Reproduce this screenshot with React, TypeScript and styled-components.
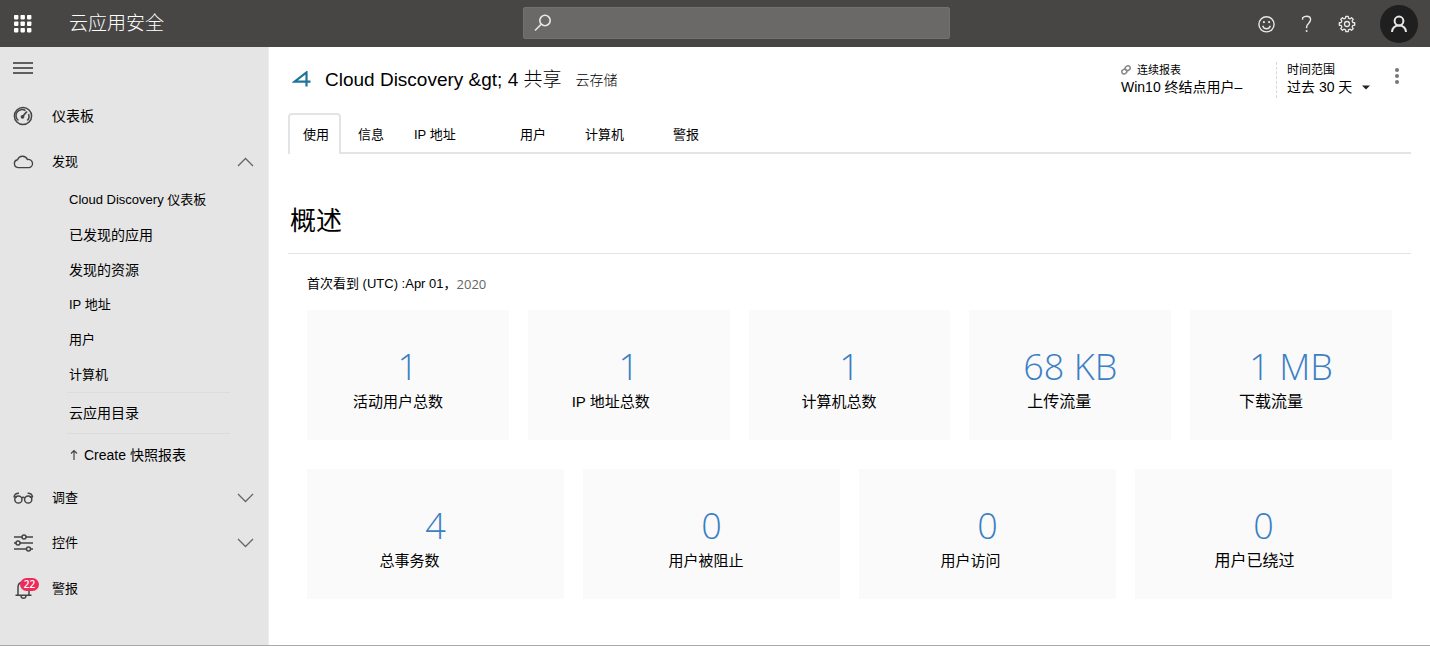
import React from "react";
import styled, { createGlobalStyle } from "styled-components";

const GlobalStyle = createGlobalStyle`
  *, *::before, *::after { box-sizing: border-box; }
  body {
    margin: 0;
    background: #fff;
    color: #000;
    font-family: "Liberation Sans", "Noto Sans CJK SC", sans-serif;
    font-size: 13px;
    line-height: 20px;
  }
  button, input, select { font: inherit; color: inherit; }
  h1, h2, p, ul, dl, dd { margin: 0; padding: 0; font-weight: 400; }
  ul { list-style: none; }
`;

const Page = styled.div`
  display: flex;
  flex-direction: column;
  min-height: 100vh;
  border-bottom: 1px solid #a8a8a8;
`;

/* ---------- top bar ---------- */

const TopBar = styled.header`
  display: grid;
  grid-template-columns: 523fr 427fr 480fr;
  align-items: center;
  height: 47px;
  background: #484644;
  color: #e8e8e8;
`;

const Brand = styled.div`
  display: flex;
  align-items: center;
  gap: 32px;
  padding-left: 8px;
`;

const BrandName = styled.span`
  color: #fff;
  font-family: "Noto Sans CJK SC", sans-serif;
  font-weight: 300;
  font-size: 19px;
  line-height: 28px;
  padding-bottom: 4px;
`;

const IconButton = styled.button<{ $size?: number }>`
  display: flex;
  align-items: center;
  justify-content: center;
  width: ${(p) => p.$size ?? 40}px;
  height: ${(p) => p.$size ?? 40}px;
  padding: 0;
  border: 0;
  background: none;
  cursor: pointer;
`;

const SearchBox = styled.label`
  display: flex;
  align-items: center;
  gap: 8px;
  height: 32px;
  padding: 0 10px;
  margin-bottom: 1px;
  border: 1px solid #73716f;
  border-radius: 2px;
  background: #6b6967;
`;

const SearchInput = styled.input`
  flex: 1;
  min-width: 0;
  border: 0;
  outline: 0;
  background: none;
`;

const Tools = styled.div`
  display: flex;
  align-items: center;
  justify-content: flex-end;
  padding-right: 12px;
`;

const Avatar = styled.button`
  display: flex;
  align-items: center;
  justify-content: center;
  width: 38px;
  height: 38px;
  margin-left: 13px;
  padding: 0;
  border: 0;
  border-radius: 50%;
  background: #1f1f1f;
  cursor: pointer;
`;

/* ---------- side navigation ---------- */

const Body = styled.div`
  display: flex;
  flex: 1;
`;

const Sidebar = styled.nav`
  flex: 0 0 269px;
  background: #e5e5e5;
  border-right: 1px solid #ececec;
`;

const MenuRow = styled.div`
  padding: 6px 0 0 8px;
  height: 42px;
`;

const NavItem = styled.a<{ $height: number }>`
  display: flex;
  align-items: center;
  height: ${(p) => p.$height}px;
  padding: 0 14px 0 12px;
  color: #000;
  text-decoration: none;
`;

const NavIcon = styled.span`
  position: relative;
  display: flex;
  width: 40px;
  color: #444;
`;

const NavLabel = styled.span<{ $size?: number }>`
  flex: 1;
  font-size: ${(p) => p.$size ?? 13}px;
`;

const Badge = styled.span`
  position: absolute;
  left: 8px;
  top: 0;
  width: 19px;
  height: 13px;
  border-radius: 7px;
  background: #ee2b58;
  color: #fff;
  font: 600 10px/13px "Open Sans", sans-serif;
  text-align: center;
`;

const SubList = styled.ul`
  padding: 0 38px 0 67px;
`;

const SubItem = styled.li<{ $height?: number; $divider?: boolean; $size?: number }>`
  display: flex;
  align-items: center;
  height: ${(p) => p.$height ?? 35}px;
  padding-left: 2px;
  border-top: ${(p) => (p.$divider ? "1px solid #dcdcdc" : "0")};
  font-size: ${(p) => p.$size ?? 13}px;
  white-space: nowrap;
`;

const SubLink = styled.a`
  display: flex;
  align-items: center;
  gap: 5px;
  color: #000;
  text-decoration: none;
`;

/* ---------- main area ---------- */

const Main = styled.main`
  flex: 1;
  min-width: 0;
  padding: 15px 19px 45px;
`;

const ReportHeader = styled.div`
  display: flex;
  align-items: flex-start;
  height: 51px;
`;

const TitleGroup = styled.div`
  display: flex;
  align-items: center;
  flex: 1;
  padding: 2px 0 0 4px;
`;

const Title = styled.h1`
  margin: 0 14px;
  font-size: 19px;
  line-height: 28px;
  white-space: nowrap;
`;

const LightCjk = styled.span`
  font-family: "Noto Sans CJK SC", sans-serif;
  font-weight: 300;
`;

const Category = styled.span`
  padding-top: 2px;
  font-size: 14px;
  font-weight: 300;
`;

const Report = styled.div`
  width: 155px;
`;

const Caption = styled.div<{ $size: number }>`
  display: flex;
  align-items: center;
  gap: 6px;
  font-size: ${(p) => p.$size}px;
  line-height: 16px;
`;

const ReportName = styled.p`
  font-size: 14px;
  line-height: 18px;
  white-space: nowrap;
`;

const Range = styled.div`
  width: 107px;
  height: 36px;
  padding-left: 10px;
  border-left: 1px dashed #d8d8d8;
`;

const SelectWrap = styled.div`
  display: flex;
  align-items: center;
  height: 18px;
`;

const Select = styled.select`
  width: 75px;
  height: 18px;
  padding: 0;
  border: 0;
  background: none;
  font-size: 14px;
  line-height: 18px;
  appearance: none;
`;

const Tabs = styled.div`
  display: flex;
  gap: 2px;
  border-bottom: 2px solid #e4e4e4;
`;

const Tab = styled.button<{ $active?: boolean; $width: number }>`
  width: ${(p) => p.$width}px;
  height: 41px;
  margin: 0 0 -2px;
  padding: 0 13px;
  border: 2px solid ${(p) => (p.$active ? "#e4e4e4" : "transparent")};
  border-bottom: 0;
  border-radius: 4px 4px 0 0;
  background: ${(p) => (p.$active ? "#fff" : "none")};
  text-align: left;
  white-space: nowrap;
  cursor: pointer;
`;

const SectionTitle = styled.h2`
  height: 100px;
  padding: 47px 0 0 2px;
  border-bottom: 1px solid #e4e4e4;
  font-size: 26px;
  line-height: 40px;
`;

const Overview = styled.section`
  padding: 20px 19px 0;
`;

const FirstSeen = styled.p`
  display: flex;
  height: 36px;
`;

const Year = styled.span`
  color: #666;
  font-family: "Open Sans", sans-serif;
`;

const CardRow = styled.dl<{ $columns: number }>`
  display: grid;
  grid-template-columns: repeat(${(p) => p.$columns}, 1fr);
  gap: 19px;
  margin-bottom: 29px;
  &:last-child { margin-bottom: 0; }
`;

const Card = styled.div`
  display: flex;
  flex-direction: column-reverse;
  align-items: center;
  justify-content: flex-end;
  height: 130px;
  padding-top: 34px;
  background: #fafafa;
`;

const Figure = styled.dd`
  color: #3b7fc4;
  font-family: "Open Sans", sans-serif;
  font-size: 36px;
  font-weight: 300;
  line-height: 46px;
`;

const CardLabel = styled.dt<{ $width: number; $size?: number }>`
  width: ${(p) => p.$width}px;
  font-size: ${(p) => p.$size ?? 15}px;
  line-height: 24px;
  white-space: nowrap;
`;

/* ---------- icons ---------- */

const Stroke = ({ w, h, sw = 1.3, children }: { w: number; h: number; sw?: number; children: React.ReactNode }) => (
  <svg width={w} height={h} viewBox={`0 0 ${w} ${h}`} fill="none" stroke="currentColor" strokeWidth={sw} aria-hidden="true">
    {children}
  </svg>
);

const WaffleIcon = () => (
  <svg width="20" height="20" viewBox="0 0 20 20" fill="#fff" aria-hidden="true">
    {[1, 7.5, 14].map((y) => [1, 7.5, 14].map((x) => <rect key={`${x}-${y}`} x={x} y={y} width="4.4" height="4.4" rx="0.8" />))}
  </svg>
);

const SearchIcon = () => (
  <Stroke w={18} h={18} sw={1.6}>
    <circle cx="11" cy="6.5" r="5.2" />
    <path d="M7.2 10.3 1 16.5" />
  </Stroke>
);

const SmileIcon = () => (
  <Stroke w={18} h={18} sw={1.4}>
    <circle cx="8.5" cy="9.3" r="7.6" />
    <path d="M4.7 10.700c.6 2 2 3 3.800 3s3.200-1 3.800-3" />
    <circle cx="5.900" cy="7.100" r="1.100" fill="currentColor" stroke="none" />
    <circle cx="11.100" cy="7.100" r="1.100" fill="currentColor" stroke="none" />
  </Stroke>
);

const HelpIcon = () => (
  <Stroke w={12} h={18} sw={1.4}>
    <path d="M1.600 4.800V2.800C2.600 1.900 4 1.200 5.600 1.200c2.400 0 4 1.400 4 3.400 0 3.600-4 4-4 7.400v1.200" />
    <circle cx="5.600" cy="16" r="1" fill="currentColor" stroke="none" />
  </Stroke>
);

const gearPath = Array.from({ length: 32 }, (_, i) => {
  const step = Math.floor(i / 4);
  const offset = [-0.24, -0.16, 0.16, 0.24][i % 4];
  const radius = i % 4 === 1 || i % 4 === 2 ? 7.8 : 6;
  const angle = (step * Math.PI) / 4 + offset;
  return `${i ? "L" : "M"}${(9 + radius * Math.cos(angle)).toFixed(2)} ${(9 + radius * Math.sin(angle)).toFixed(2)}`;
}).join("");

const GearIcon = () => (
  <Stroke w={18} h={18} sw={1.3}>
    <path d={`${gearPath}Z`} strokeLinejoin="round" />
    <circle cx="9" cy="9" r="2.500" />
  </Stroke>
);

const PersonIcon = () => (
  <Stroke w={18} h={18} sw={2}>
    <circle cx="9" cy="6" r="4.400" />
    <path d="M2 17c.3-4 3-6.600 7-6.600s6.700 2.600 7 6.600" />
  </Stroke>
);

const MenuIcon = () => (
  <Stroke w={20} h={14} sw={1.5}>
    <path d="M0 2h20M0 7h20M0 12h20" stroke="#333" />
  </Stroke>
);

const GaugeIcon = () => (
  <Stroke w={22} h={20} sw={1.500}>
    <circle cx="11" cy="10" r="8.600" />
    <path d="M6.500 14.500A6 6 0 0 1 13.500 4.700M16.500 8a6 6 0 0 1-1.200 6.500" />
    <path d="M10.500 10.500 15 5.500" strokeWidth="1.800" />
    <circle cx="10.500" cy="10.800" r="1.900" fill="currentColor" stroke="none" />
  </Stroke>
);

const CloudIcon = () => (
  <Stroke w={22} h={14} sw={1.400}>
    <path d="M6 12.600a4 4 0 0 1-.4-7.900A5.300 5.300 0 0 1 15.400 4.500a4.100 4.100 0 0 1 1.900 8.100Z" />
  </Stroke>
);

const GlassesIcon = () => (
  <Stroke w={22} h={14} sw={1.500}>
    <ellipse cx="6.400" cy="8.500" rx="3.600" ry="3.600" />
    <ellipse cx="16.200" cy="8.500" rx="3.600" ry="3.600" />
    <path d="M9.600 7c1-.9 2.200-.9 3.200 0M2 6c.5-2.400 2.500-3.800 5-3.700M20.600 6c-.5-2.400-2.500-3.800-5-3.700M1.600 5.900h3.400M17.600 5.900h3.400" />
  </Stroke>
);

const SlidersIcon = () => (
  <Stroke w={22} h={20} sw={1.500}>
    <path d="M2 4h8M14 4h7M2 10h2M8 10h13M2 16h12.500M18.500 16H21" />
    <circle cx="12" cy="4" r="2" />
    <circle cx="6" cy="10" r="2" />
    <circle cx="16.500" cy="16" r="2" />
  </Stroke>
);

const BellIcon = () => (
  <Stroke w={22} h={22} sw={1.500}>
    <path d="M6 17V9.500C6 6 8.300 4 11.500 4S17 6 17 9.500V17M3.500 17.300h16M9 18c.3 3 4.700 3 5 0" />
  </Stroke>
);

const Chevron = ({ up }: { up?: boolean }) => (
  <Stroke w={17} h={10} sw={1.300}>
    <path d={up ? "M1 9 8.500 1.500 16 9" : "M1 1 8.500 8.500 16 1"} stroke="#666" />
  </Stroke>
);

const UpArrow = () => (
  <Stroke w={10} h={12} sw={1.200}>
    <path d="M5 11V1.500M2 4.500l3-3 3 3" stroke="#444" />
  </Stroke>
);

const LinkIcon = () => (
  <Stroke w={10} h={10} sw={1.500}>
    <rect x="4.200" y="1" width="5" height="4.400" rx="2.200" transform="rotate(-30 6.700 3.200)" stroke="#888" />
    <rect x="0.800" y="4.400" width="5" height="4.400" rx="2.200" transform="rotate(-30 3.300 6.600)" stroke="#888" />
  </Stroke>
);

const CaretIcon = () => (
  <svg width="8" height="5" viewBox="0 0 8 5" aria-hidden="true">
    <path d="M0 0.500h8L4 4.500Z" fill="#222" />
  </svg>
);

const KebabIcon = () => (
  <svg width="6" height="18" viewBox="0 0 6 18" fill="#777" aria-hidden="true">
    <circle cx="3" cy="3" r="2" />
    <circle cx="3" cy="9" r="2" />
    <circle cx="3" cy="15" r="2" />
  </svg>
);

const AppLogo = () => (
  <svg width="19" height="16" viewBox="0 0 19 16" fill="none" stroke="#1f739c" aria-hidden="true">
    <path d="M14.500 15.500V1.400L2.500 10.600H18.500" strokeWidth="2.200" />
  </svg>
);

/* ---------- data ---------- */

const tabs = [
  { text: "使用", width: 53 },
  { text: "信息", width: 54 },
  { text: "IP 地址", width: 104 },
  { text: "用户", width: 63 },
  { text: "计算机", width: 86 },
  { text: "警报", width: 60 },
];

type Stat = { value: string; label: string; width: number; size?: number };

const traffic: Stat[] = [
  { value: "1", label: "活动用户总数", width: 110 },
  { value: "1", label: "IP 地址总数", width: 114 },
  { value: "1", label: "计算机总数", width: 96 },
  { value: "68 KB", label: "上传流量", width: 86, size: 16 },
  { value: "1 MB", label: "下载流量", width: 104, size: 16 },
];

const events: Stat[] = [
  { value: "4", label: "总事务数", width: 112 },
  { value: "0", label: "用户被阻止", width: 86 },
  { value: "0", label: "用户访问", width: 94 },
  { value: "0", label: "用户已绕过", width: 98, size: 16 },
];

const Stats = ({ items }: { items: Stat[] }) => (
  <CardRow $columns={items.length}>
    {items.map((s) => (
      <Card key={s.label}>
        <CardLabel $width={s.width} $size={s.size}>{s.label}</CardLabel>
        <Figure>{s.value}</Figure>
      </Card>
    ))}
  </CardRow>
);

export default function App() {
  return (
    <Page>
      <GlobalStyle />
      <TopBar>
        <Brand>
          <IconButton $size={29} aria-label="应用启动器"><WaffleIcon /></IconButton>
          <BrandName>云应用安全</BrandName>
        </Brand>
        <SearchBox>
          <SearchIcon />
          <SearchInput type="search" aria-label="搜索" />
        </SearchBox>
        <Tools>
          <IconButton aria-label="反馈"><SmileIcon /></IconButton>
          <IconButton aria-label="帮助"><HelpIcon /></IconButton>
          <IconButton aria-label="设置"><GearIcon /></IconButton>
          <Avatar aria-label="帐户"><PersonIcon /></Avatar>
        </Tools>
      </TopBar>
      <Body>
        <Sidebar>
          <MenuRow>
            <IconButton $size={30} aria-label="菜单"><MenuIcon /></IconButton>
          </MenuRow>
          <NavItem href="#dashboard" $height={53}>
            <NavIcon><GaugeIcon /></NavIcon>
            <NavLabel $size={14}>仪表板</NavLabel>
          </NavItem>
          <NavItem href="#discover" $height={40}>
            <NavIcon><CloudIcon /></NavIcon>
            <NavLabel>发现</NavLabel>
            <Chevron up />
          </NavItem>
          <SubList>
            <SubItem><SubLink href="#discovery">Cloud Discovery 仪表板</SubLink></SubItem>
            <SubItem $size={14}><SubLink href="#apps">已发现的应用</SubLink></SubItem>
            <SubItem $size={14}><SubLink href="#resources">发现的资源</SubLink></SubItem>
            <SubItem><SubLink href="#ip">IP 地址</SubLink></SubItem>
            <SubItem><SubLink href="#users">用户</SubLink></SubItem>
            <SubItem><SubLink href="#machines">计算机</SubLink></SubItem>
            <SubItem $size={14} $height={41} $divider><SubLink href="#catalog">云应用目录</SubLink></SubItem>
            <SubItem $size={14} $height={43} $divider>
              <SubLink href="#snapshot"><UpArrow />Create 快照报表</SubLink>
            </SubItem>
          </SubList>
          <NavItem href="#investigate" $height={44}>
            <NavIcon><GlassesIcon /></NavIcon>
            <NavLabel>调查</NavLabel>
            <Chevron />
          </NavItem>
          <NavItem href="#control" $height={46}>
            <NavIcon><SlidersIcon /></NavIcon>
            <NavLabel>控件</NavLabel>
            <Chevron />
          </NavItem>
          <NavItem href="#alerts" $height={46}>
            <NavIcon><BellIcon /><Badge>22</Badge></NavIcon>
            <NavLabel>警报</NavLabel>
          </NavItem>
        </Sidebar>
        <Main>
          <ReportHeader>
            <TitleGroup>
              <AppLogo />
              <Title>Cloud Discovery &amp;gt; 4 <LightCjk>共享</LightCjk></Title>
              <Category>云存储</Category>
            </TitleGroup>
            <Report>
              <Caption $size={11}><LinkIcon />连续报表</Caption>
              <ReportName>Win10 终结点用户–</ReportName>
            </Report>
            <Range>
              <Caption as="label" htmlFor="range" $size={12}>时间范围</Caption>
              <SelectWrap>
                <Select id="range"><option>过去 30 天</option></Select>
                <CaretIcon />
              </SelectWrap>
            </Range>
            <IconButton $size={28} aria-label="更多"><KebabIcon /></IconButton>
          </ReportHeader>
          <Tabs role="tablist">
            {tabs.map((t, i) => (
              <Tab key={t.text} role="tab" aria-selected={i === 0} $active={i === 0} $width={t.width}>{t.text}</Tab>
            ))}
          </Tabs>
          <SectionTitle>概述</SectionTitle>
          <Overview>
            <FirstSeen>
              <span>首次看到 (UTC) :Apr 01，</span>
              <Year>2020</Year>
            </FirstSeen>
            <Stats items={traffic} />
            <Stats items={events} />
          </Overview>
        </Main>
      </Body>
    </Page>
  );
}
